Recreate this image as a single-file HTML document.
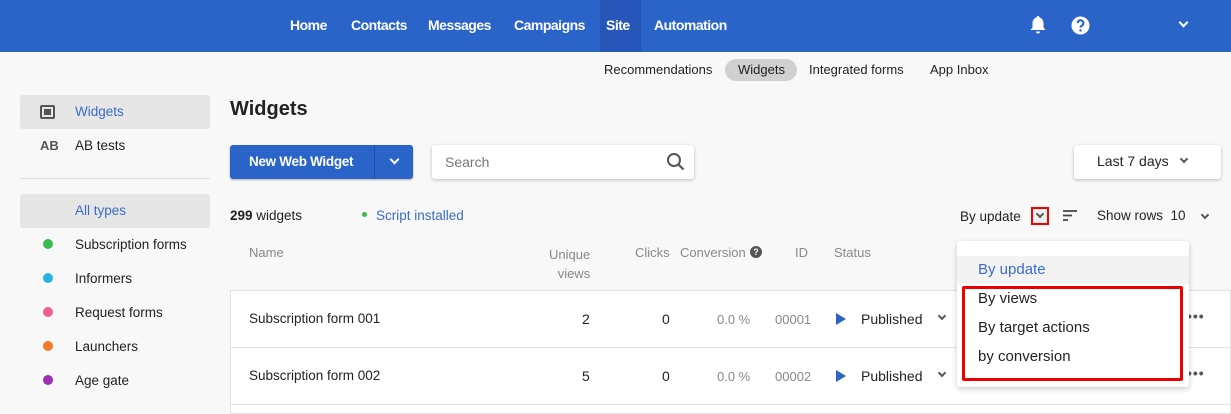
<!DOCTYPE html>
<html><head><meta charset="utf-8"><style>
*{margin:0;padding:0;box-sizing:border-box}
body{width:1231px;height:409px;overflow:hidden;background:#f8f8f8;font-family:"Liberation Sans",sans-serif;font-size:14px;color:#222;position:relative}
.a{position:absolute;white-space:nowrap}
.hdr{position:absolute;left:0;top:0;width:1231px;height:52px;background:#2b64c9}
.nav{color:#fff;font-size:14px;top:17px;font-weight:bold;letter-spacing:-0.5px}
.dot{position:absolute;width:10px;height:10px;border-radius:50%;left:43px}
.sb{left:75px;font-size:13.5px}
.card{position:absolute;left:230px;width:1001px;background:#fff;border:1px solid #e2e2e2}
.g{color:#888;font-size:13px}
.chev{display:block;width:7px;height:7px;border-right:2px solid #444;border-bottom:2px solid #444;transform:rotate(45deg)}
</style></head><body>
<div class="hdr"></div>
<div class="a" style="left:600px;top:0;width:41px;height:52px;background:#2657b8"></div>
<div class="a nav" style="left:290px">Home</div>
<div class="a nav" style="left:351px">Contacts</div>
<div class="a nav" style="left:428px">Messages</div>
<div class="a nav" style="left:514px">Campaigns</div>
<div class="a nav" style="left:606px">Site</div>
<div class="a nav" style="left:654px">Automation</div>
<svg class="a" style="left:1029px;top:15px" width="18" height="20" viewBox="0 0 18 20"><path d="M9 1c-1 0-1.5.8-1.5 1.5C4.5 3.3 3.5 6 3.5 8.5v4L1.5 15h15l-2-2.5v-4c0-2.5-1-5.2-4-6C10.5 1.8 10 1 9 1zM7 16.5a2 2 0 0 0 4 0z" fill="#fff"/></svg>
<svg class="a" style="left:1071px;top:16px" width="19" height="19" viewBox="0 0 20 20"><circle cx="10" cy="10" r="9.5" fill="#fff"/><path d="M7 7.5a3 3 0 1 1 4.5 2.6c-1 .6-1.5 1-1.5 2.2" stroke="#2b64c9" stroke-width="2.2" fill="none"/><circle cx="10" cy="15.2" r="1.3" fill="#2b64c9"/></svg>
<div class="a" style="left:1180px;top:19px"><span class="chev" style="border-color:#fff"></span></div>

<div class="a" style="left:604px;top:62px;font-size:13px">Recommendations</div>
<div class="a" style="left:725px;top:59px;width:72px;height:22px;border-radius:11px;background:#d0d0d0"></div>
<div class="a" style="left:738px;top:62px;font-size:13px">Widgets</div>
<div class="a" style="left:809px;top:62px;font-size:13px">Integrated forms</div>
<div class="a" style="left:930px;top:62px;font-size:13px">App Inbox</div>

<div class="a" style="left:20px;top:95px;width:190px;height:34px;background:#e6e6e6;border-radius:3px"></div>
<div class="a" style="left:40px;top:105px;width:15px;height:14px;border:2px solid #555;border-radius:2px"><div style="margin:2px;width:7px;height:6px;background:#555"></div></div>
<div class="a sb" style="top:104px;color:#3a6cc9">Widgets</div>
<div class="a" style="left:40px;top:138px;font-weight:bold;color:#555;font-size:13px">AB</div>
<div class="a sb" style="top:138px">AB tests</div>
<div class="a" style="left:20px;top:178px;width:190px;height:1px;background:#e0e0e0"></div>
<div class="a" style="left:20px;top:194px;width:190px;height:34px;background:#e6e6e6;border-radius:3px"></div>
<div class="a sb" style="top:203px;color:#3a6cc9">All types</div>
<div class="dot" style="top:239px;background:#3cb94f"></div><div class="a sb" style="top:237px">Subscription forms</div>
<div class="dot" style="top:273px;background:#2ab0e3"></div><div class="a sb" style="top:271px">Informers</div>
<div class="dot" style="top:307px;background:#f05d8a"></div><div class="a sb" style="top:305px">Request forms</div>
<div class="dot" style="top:341px;background:#f07a2a"></div><div class="a sb" style="top:339px">Launchers</div>
<div class="dot" style="top:375px;background:#9b30b5"></div><div class="a sb" style="top:373px">Age gate</div>

<div class="a" style="left:230px;top:98px;font-size:20px;font-weight:bold">Widgets</div>
<div class="a" style="left:230px;top:145px;width:183px;height:34px;background:#2b64c9;border-radius:3px;box-shadow:0 1px 2px rgba(0,0,0,.3)"></div>
<div class="a" style="left:374px;top:145px;width:1px;height:34px;background:#1e50aa"></div>
<div class="a" style="left:249px;top:154px;color:#fff;font-weight:bold;font-size:13.5px;letter-spacing:-0.3px">New Web Widget</div>
<div class="a" style="left:391px;top:156px"><span class="chev" style="border-color:#fff"></span></div>
<div class="a" style="left:432px;top:145px;width:262px;height:34px;background:#fff;border-radius:3px;box-shadow:0 1px 3px rgba(0,0,0,.25)"></div>
<div class="a" style="left:445px;top:154px;color:#777;font-size:14px">Search</div>
<svg class="a" style="left:666px;top:152px" width="20" height="20" viewBox="0 0 20 20"><circle cx="8" cy="8" r="6" stroke="#555" stroke-width="2" fill="none"/><path d="M12.5 12.5l5 5" stroke="#555" stroke-width="2.2"/></svg>
<div class="a" style="left:1074px;top:145px;width:147px;height:34px;background:#fff;border-radius:3px;box-shadow:0 1px 3px rgba(0,0,0,.25)"></div>
<div class="a" style="left:1097px;top:153px;font-size:14px">Last 7 days</div>
<div class="a" style="left:1181px;top:156px"><span class="chev" style="width:6px;height:6px;border-color:#555"></span></div>

<div class="a" style="left:230px;top:208px;font-size:13.5px"><b>299</b> widgets</div>
<div class="a" style="left:362px;top:212px;width:5px;height:5px;border-radius:50%;background:#3cb94f"></div>
<div class="a" style="left:376px;top:208px;color:#3a6cc9;font-size:13.5px">Script installed</div>
<div class="a" style="left:960px;top:209px;font-size:13.5px">By update</div>
<div class="a" style="left:1031px;top:207px;width:18px;height:18px;border:2px solid #e00;background:#eee"></div>
<div class="a" style="left:1037px;top:211px"><span class="chev" style="width:6px;height:6px;border-color:#555"></span></div>
<svg class="a" style="left:1063px;top:209px" width="14" height="13"><path d="M0 2h14M0 6.5h9M0 11h5" stroke="#444" stroke-width="1.8"/></svg>
<div class="a" style="left:1097px;top:208px;font-size:13.5px">Show rows&nbsp; 10</div>
<div class="a" style="left:1202px;top:212px"><span class="chev" style="width:6px;height:6px;border-color:#555"></span></div>

<div class="a g" style="left:249px;top:245px">Name</div>
<div class="a g" style="left:549px;top:245px;text-align:right;line-height:19px">Unique<br>&nbsp;&nbsp;views</div>
<div class="a g" style="left:635px;top:245px">Clicks</div>
<div class="a g" style="left:680px;top:245px">Conversion</div>
<div class="a" style="left:750px;top:246px;width:12px;height:12px;border-radius:50%;background:#555;color:#fff;font-size:9px;text-align:center;line-height:12px;font-weight:bold">?</div>
<div class="a g" style="left:795px;top:245px">ID</div>
<div class="a g" style="left:834px;top:245px">Status</div>

<div class="card" style="top:290px;height:58px"></div>
<div class="card" style="top:347px;height:58px"></div>
<div class="card" style="top:404px;height:10px"></div>
<div class="a" style="left:249px;top:311px;font-size:13.5px">Subscription form 001</div>
<div class="a" style="left:582px;top:311px">2</div><div class="a" style="left:662px;top:311px">0</div>
<div class="a g" style="left:717px;top:312px">0.0 %</div><div class="a g" style="left:775px;top:312px">00001</div>
<svg class="a" style="left:836px;top:313px" width="10" height="12"><path d="M0 0l10 6-10 6z" fill="#2b64c9"/></svg>
<div class="a" style="left:861px;top:311px">Published</div>
<div class="a" style="left:939px;top:313px"><span class="chev" style="width:6px;height:6px;border-color:#555"></span></div>
<div class="a" style="left:249px;top:368px;font-size:13.5px">Subscription form 002</div>
<div class="a" style="left:582px;top:368px">5</div><div class="a" style="left:662px;top:368px">0</div>
<div class="a g" style="left:717px;top:369px">0.0 %</div><div class="a g" style="left:775px;top:369px">00002</div>
<svg class="a" style="left:836px;top:370px" width="10" height="12"><path d="M0 0l10 6-10 6z" fill="#2b64c9"/></svg>
<div class="a" style="left:861px;top:368px">Published</div>
<div class="a" style="left:939px;top:370px"><span class="chev" style="width:6px;height:6px;border-color:#555"></span></div>
<div class="a" style="left:1187px;top:308px;font-weight:bold;color:#555;letter-spacing:1px">•••</div>
<div class="a" style="left:1187px;top:365px;font-weight:bold;color:#555;letter-spacing:1px">•••</div>

<div class="a" style="left:957px;top:241px;width:232px;height:146px;background:#fff;border-radius:3px;box-shadow:0 2px 6px rgba(0,0,0,.2)"></div>
<div class="a" style="left:957px;top:256px;width:232px;height:28px;background:#f3f3f3"></div>
<div class="a" style="left:978px;top:261px;color:#3a6cc9;font-size:15px">By update</div>
<div class="a" style="left:962px;top:286px;width:221px;height:95px;border:3px solid #e00;border-radius:2px"></div>
<div class="a" style="left:978px;top:290px;font-size:15px">By views</div>
<div class="a" style="left:978px;top:319px;font-size:15px">By target actions</div>
<div class="a" style="left:978px;top:348px;font-size:15px">by conversion</div>
</body></html>
